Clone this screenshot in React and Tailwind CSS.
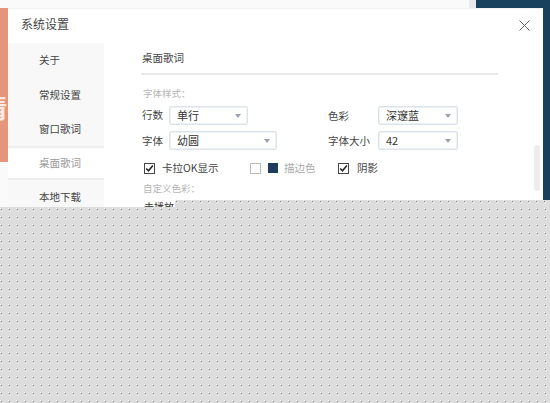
import React from "react";

function Select({ label, w }) {
  return (
    <div className={`${w} h-[19px] border border-[#dde3ea] shadow-[inset_0_0_0_1px_#eef1f4] rounded-[2px] bg-white flex items-center justify-between pl-[7px] pr-[6px] text-[#333] text-[11px]`}>
      <span>{label}</span>
      <span className="w-0 h-0 border-l-[3px] border-r-[3px] border-t-[4px] border-l-transparent border-r-transparent border-t-[#9aa3ad]" />
    </div>
  );
}

function Check({ on }) {
  return (
    <span className={`w-[11px] h-[11px] flex items-center justify-center border ${on ? "border-[#444]" : "border-[#bbb]"} bg-white`}>
      {on && (
        <svg width="9" height="9" viewBox="0 0 9 9" fill="none">
          <path d="M1.2 4.4 L3.5 6.8 L7.9 1.6" stroke="#222" strokeWidth="1.5" />
        </svg>
      )}
    </span>
  );
}

const pattern =
  "bg-[#dddddd] bg-[radial-gradient(circle_at_1.5px_1.5px,#808080_0.45px,transparent_0.85px),radial-gradient(circle_at_0.5px_0.5px,#f4f4f4_0.45px,transparent_0.85px),radial-gradient(circle_at_2.5px_2.5px,#f4f4f4_0.45px,transparent_0.85px)] bg-[length:8px_8px]";

export default function App() {
  return (
    <div className="relative w-[550px] h-[403px] overflow-hidden bg-white text-[10.5px] text-[#444] font-['Noto_Sans_CJK_SC','Liberation_Sans',sans-serif]">
      <div className="flex h-2">
        <div className="flex-1 bg-[#fafafa]" />
        <div className="w-[7px] bg-[#e9e9e9]" />
        <div className="w-[74px] bg-[#17415c]" />
      </div>
      <div className="flex h-[199px]">
        <div className="w-2 flex flex-col">
          <div className="h-[154px] bg-[#e5967a] overflow-hidden pt-[84px]">
            <span className="block -ml-[19px] text-[26px] leading-[30px] font-bold text-[#fbe9e2]">情</span>
          </div>
          <div className="flex-1 bg-[#fafafa]" />
        </div>
        <div className="relative flex-1 bg-white rounded-tr-[2px] border-t border-[#efefef]">
          <div className="h-[34px] pl-[13px] flex items-start justify-between pr-[13px]">
            <span className="text-[12px] leading-[18px] mt-[6px] text-[#444]">系统设置</span>
            <svg width="11" height="11" viewBox="0 0 11 11" fill="none" className="mt-[11px]">
              <path d="M0.5 0.5 L10.5 10.5 M10.5 0.5 L0.5 10.5" stroke="#666" strokeWidth="1" />
            </svg>
          </div>
          <div className="flex">
            <div className="w-[96px] flex flex-col items-stretch">
              <div className="h-[34.5px] bg-[#f8f8f8] pl-[31px] flex items-center">关于</div>
              <div className="h-[34.5px] bg-[#f8f8f8] pl-[31px] flex items-center">常规设置</div>
              <div className="h-[34px] bg-[#f8f8f8] pl-[31px] flex items-center">窗口歌词</div>
              <div className="h-[34px] bg-white border-y-2 border-[#eeeeee] pl-[31px] flex items-center text-[#999]">桌面歌词</div>
              <div className="h-[34px] bg-[#f8f8f8] pl-[31px] flex items-center">本地下载</div>
            </div>
            <div className="flex-1 pl-[37px] pr-[45px]">
              <div className="h-[32px] flex items-center pb-[1px] pl-[1px] border-b-2 border-[#e9e9e9]">桌面歌词</div>
              <div className="mt-[11px] text-[9.5px] leading-[14px] text-[#b5b5b5] pl-[2px]">字体样式：</div>
              <div className="mt-[6px] flex items-center">
                <span className="w-[28px] pl-[1px] -mt-[1px]">行数</span>
                <Select label="单行" w="w-[79px]" />
                <span className="ml-[80px] w-[50px]">色彩</span>
                <Select label="深邃蓝" w="w-[80px]" />
              </div>
              <div className="mt-[6px] flex items-center">
                <span className="w-[28px] pl-[1px]">字体</span>
                <Select label="幼圆" w="w-[108px]" />
                <span className="ml-[51px] w-[50px]">字体大小</span>
                <Select label="42" w="w-[80px]" />
              </div>
              <div className="mt-[6px] h-[24px] flex items-center pl-[3px]">
                <Check on />
                <span className="ml-[7px] w-[88px] text-[10.5px]">卡拉OK显示</span>
                <Check />
                <span className="ml-[7px] w-[10px] h-[10px] bg-[#1f3d5c]" />
                <span className="ml-[6px] w-[54px] text-[#aaa]">描边色</span>
                <Check on />
                <span className="ml-[8px]">阴影</span>
              </div>
              <div className="mt-[1px] text-[9.5px] leading-[14px] text-[#b5b5b5] pl-[2px]">自定义色彩：</div>
              <div className="mt-[5px] pl-[3px] text-[10px] leading-[14px] text-[#333]">未播放</div>
            </div>
          </div>
          <div className="absolute left-[526px] top-[136px] w-[6px] h-[46px] rounded-full bg-[#ececec]" />
        </div>
        <div className="w-[7px] bg-[#17415c]" />
      </div>
      <div className={`absolute left-0 right-0 top-[207px] bottom-0 ${pattern} bg-[position:0_1px]`} />
      <div className={`absolute left-[175px] right-0 top-[200px] h-[8px] ${pattern}`} />
    </div>
  );
}
